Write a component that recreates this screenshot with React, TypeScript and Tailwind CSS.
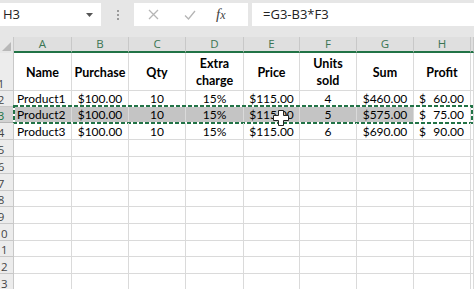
import React from "react";

const COLS = "grid grid-cols-[14px_58px_57px_57px_58px_56px_57px_57px_57px_1fr]";

type Cell = { t: React.ReactNode; align?: "left" | "center" | "acct" };

const header: Cell[] = [
  { t: "Name" },
  { t: "Purchase" },
  { t: "Qty" },
  { t: <>Extra<br />charge</> },
  { t: "Price" },
  { t: <>Units<br />sold</> },
  { t: "Sum" },
  { t: "Profit" },
];

function dataRow(name: string, units: string, sum: string, profit: string): Cell[] {
  return [
    { t: name, align: "left" },
    { t: "$100.00" },
    { t: "10" },
    { t: "15%" },
    { t: "$115.00" },
    { t: units },
    { t: sum },
    { t: profit, align: "acct" },
  ];
}

const rows: { n: string; h: string; cells?: Cell[]; bold?: boolean; sel?: boolean }[] = [
  { n: "1", h: "h-[38px]", cells: header, bold: true },
  { n: "2", h: "h-[16px]", cells: dataRow("Product1", "4", "$460.00", "60.00") },
  { n: "3", h: "h-[16px]", cells: dataRow("Product2", "5", "$575.00", "75.00"), sel: true },
  { n: "4", h: "h-[17px]", cells: dataRow("Product3", "6", "$690.00", "90.00") },
  { n: "5", h: "h-[17px]" },
  { n: "6", h: "h-[17px]" },
  { n: "7", h: "h-[17px]" },
  { n: "8", h: "h-[16px]" },
  { n: "9", h: "h-[17px]" },
  { n: "10", h: "h-[17px]" },
  { n: "11", h: "h-[16px]" },
  { n: "12", h: "h-[17px]" },
  { n: "13", h: "h-[17px]" },
];

const letters = ["A", "B", "C", "D", "E", "F", "G", "H", ""];

export default function App() {
  return (
    <div className="relative w-[474px] h-[289px] overflow-hidden bg-white font-['Lato','Liberation_Sans',sans-serif] text-black">
      {/* formula bar */}
      <div className="flex h-[37px] items-start bg-[#e6e6e6] pt-[3px]">
        <div className="flex h-[23px] w-[101px] items-center justify-between bg-white pl-[3px] pr-[8px] font-['Open_Sans','Liberation_Sans',sans-serif] text-[13px] text-[#222]">
          <span>H3</span>
          <svg width="7" height="4" viewBox="0 0 7 4"><path d="M0 0h7L3.5 4z" fill="#555" /></svg>
        </div>
        <div className="flex h-[23px] w-[33px] flex-col items-center justify-center gap-[2px]">
          <span className="h-[2px] w-[2px] bg-[#9a9a9a]" />
          <span className="h-[2px] w-[2px] bg-[#9a9a9a]" />
          <span className="h-[2px] w-[2px] bg-[#9a9a9a]" />
        </div>
        <div className="flex h-[23px] w-[114px] items-center bg-white">
          <svg className="ml-[14px]" width="11" height="11" viewBox="0 0 11 11">
            <path d="M1 1L10 10M10 1L1 10" stroke="#b5b5b5" strokeWidth="1.3" />
          </svg>
          <svg className="ml-[25px]" width="12" height="10" viewBox="0 0 12 10">
            <path d="M1 5.5L4.5 9L11 1" stroke="#b5b5b5" strokeWidth="1.3" fill="none" />
          </svg>
          <span className="ml-[20px] font-['Liberation_Serif',serif] text-[15px] italic leading-none text-[#444]">
            f<span className="text-[12px]">x</span>
          </span>
        </div>
        <div className="ml-[4px] flex h-[23px] flex-1 items-center bg-white pl-[11px] font-['Open_Sans','Liberation_Sans',sans-serif] text-[13px] text-[#222]">
          =G3-B3*F3
        </div>
      </div>

      {/* column headers */}
      <div className={`${COLS} h-[16px]`}>
        <div className="relative border-r border-[#c8c8c8] bg-[#e6e6e6]">
          <svg className="absolute bottom-[2px] right-[2px]" width="9" height="9" viewBox="0 0 9 9">
            <path d="M9 0V9H0z" fill="#b8b8b8" />
          </svg>
        </div>
        {letters.map((l, i) => (
          <div
            key={i}
            className="flex items-center justify-center border-b-2 border-r border-b-[#217346] border-r-[#c8c8c8] bg-[#dfdfdf] font-['Open_Sans','Liberation_Sans',sans-serif] text-[11.5px] leading-none text-[#3a7553]"
          >
            {l}
          </div>
        ))}
      </div>

      {/* rows */}
      {rows.map((r) => (
        <div key={r.n} className={`${COLS} relative ${r.h}`}>
          <div
            className={`overflow-hidden border-b border-r ${
              r.sel ? "border-[#b5b5b5] bg-[#d2d2d2] text-[#217346]" : "border-[#c8c8c8] bg-[#ececec] text-[#444]"
            } flex items-end`}
          >
            <div className="-ml-[12px] w-[26px] shrink-0 pb-[1px] text-center font-['Open_Sans','Liberation_Sans',sans-serif] text-[11.5px] leading-none">
              {r.n}
            </div>
          </div>
          {Array.from({ length: 9 }).map((_, i) => {
            const c = r.cells?.[i];
            const selBg = r.sel && i < 7 ? "bg-[#c4c4c4]" : "";
            if (!c)
              return <div key={i} className={`border-b border-r border-[#dadada] ${selBg}`} />;
            if (r.bold)
              return (
                <div
                  key={i}
                  className="flex items-center justify-center border-b border-r border-[#dadada] pt-[1px] text-center text-[12.5px] font-bold leading-[17px]"
                >
                  <span>{c.t}</span>
                </div>
              );
            if (c.align === "acct")
              return (
                <div
                  key={i}
                  className={`flex items-end justify-between border-b border-r border-[#dadada] pl-[5px] pr-[6px] text-[12px] leading-[14px] ${selBg}`}
                >
                  <span>$</span>
                  <span>{c.t}</span>
                </div>
              );
            return (
              <div
                key={i}
                className={`flex items-end border-b border-r border-[#dadada] text-[12px] leading-[14px] ${
                  c.align === "left" ? "justify-start pl-[3px]" : "justify-center"
                } ${selBg}`}
              >
                <span>{c.t}</span>
              </div>
            );
          })}
          {r.sel && (
            <svg className="pointer-events-none absolute left-[13px] top-[-2px]" width="460" height="19" viewBox="0 0 460 19">
              <rect x="1" y="1" width="458" height="17" fill="none" stroke="#ffffff" strokeWidth="2" />
              <rect x="1" y="1" width="458" height="17" fill="none" stroke="#217346" strokeWidth="2" strokeDasharray="4 2" />
            </svg>
          )}
        </div>
      ))}

      {/* cursor */}
      <svg className="pointer-events-none absolute left-[273px] top-[110px]" width="16" height="16" viewBox="0 0 16 16">
        <path
          d="M5.5 0.5h5v5h5v5h-5v5h-5v-5h-5v-5h5z"
          fill="#ffffff"
          stroke="#222"
          strokeWidth="1"
        />
      </svg>
    </div>
  );
}
